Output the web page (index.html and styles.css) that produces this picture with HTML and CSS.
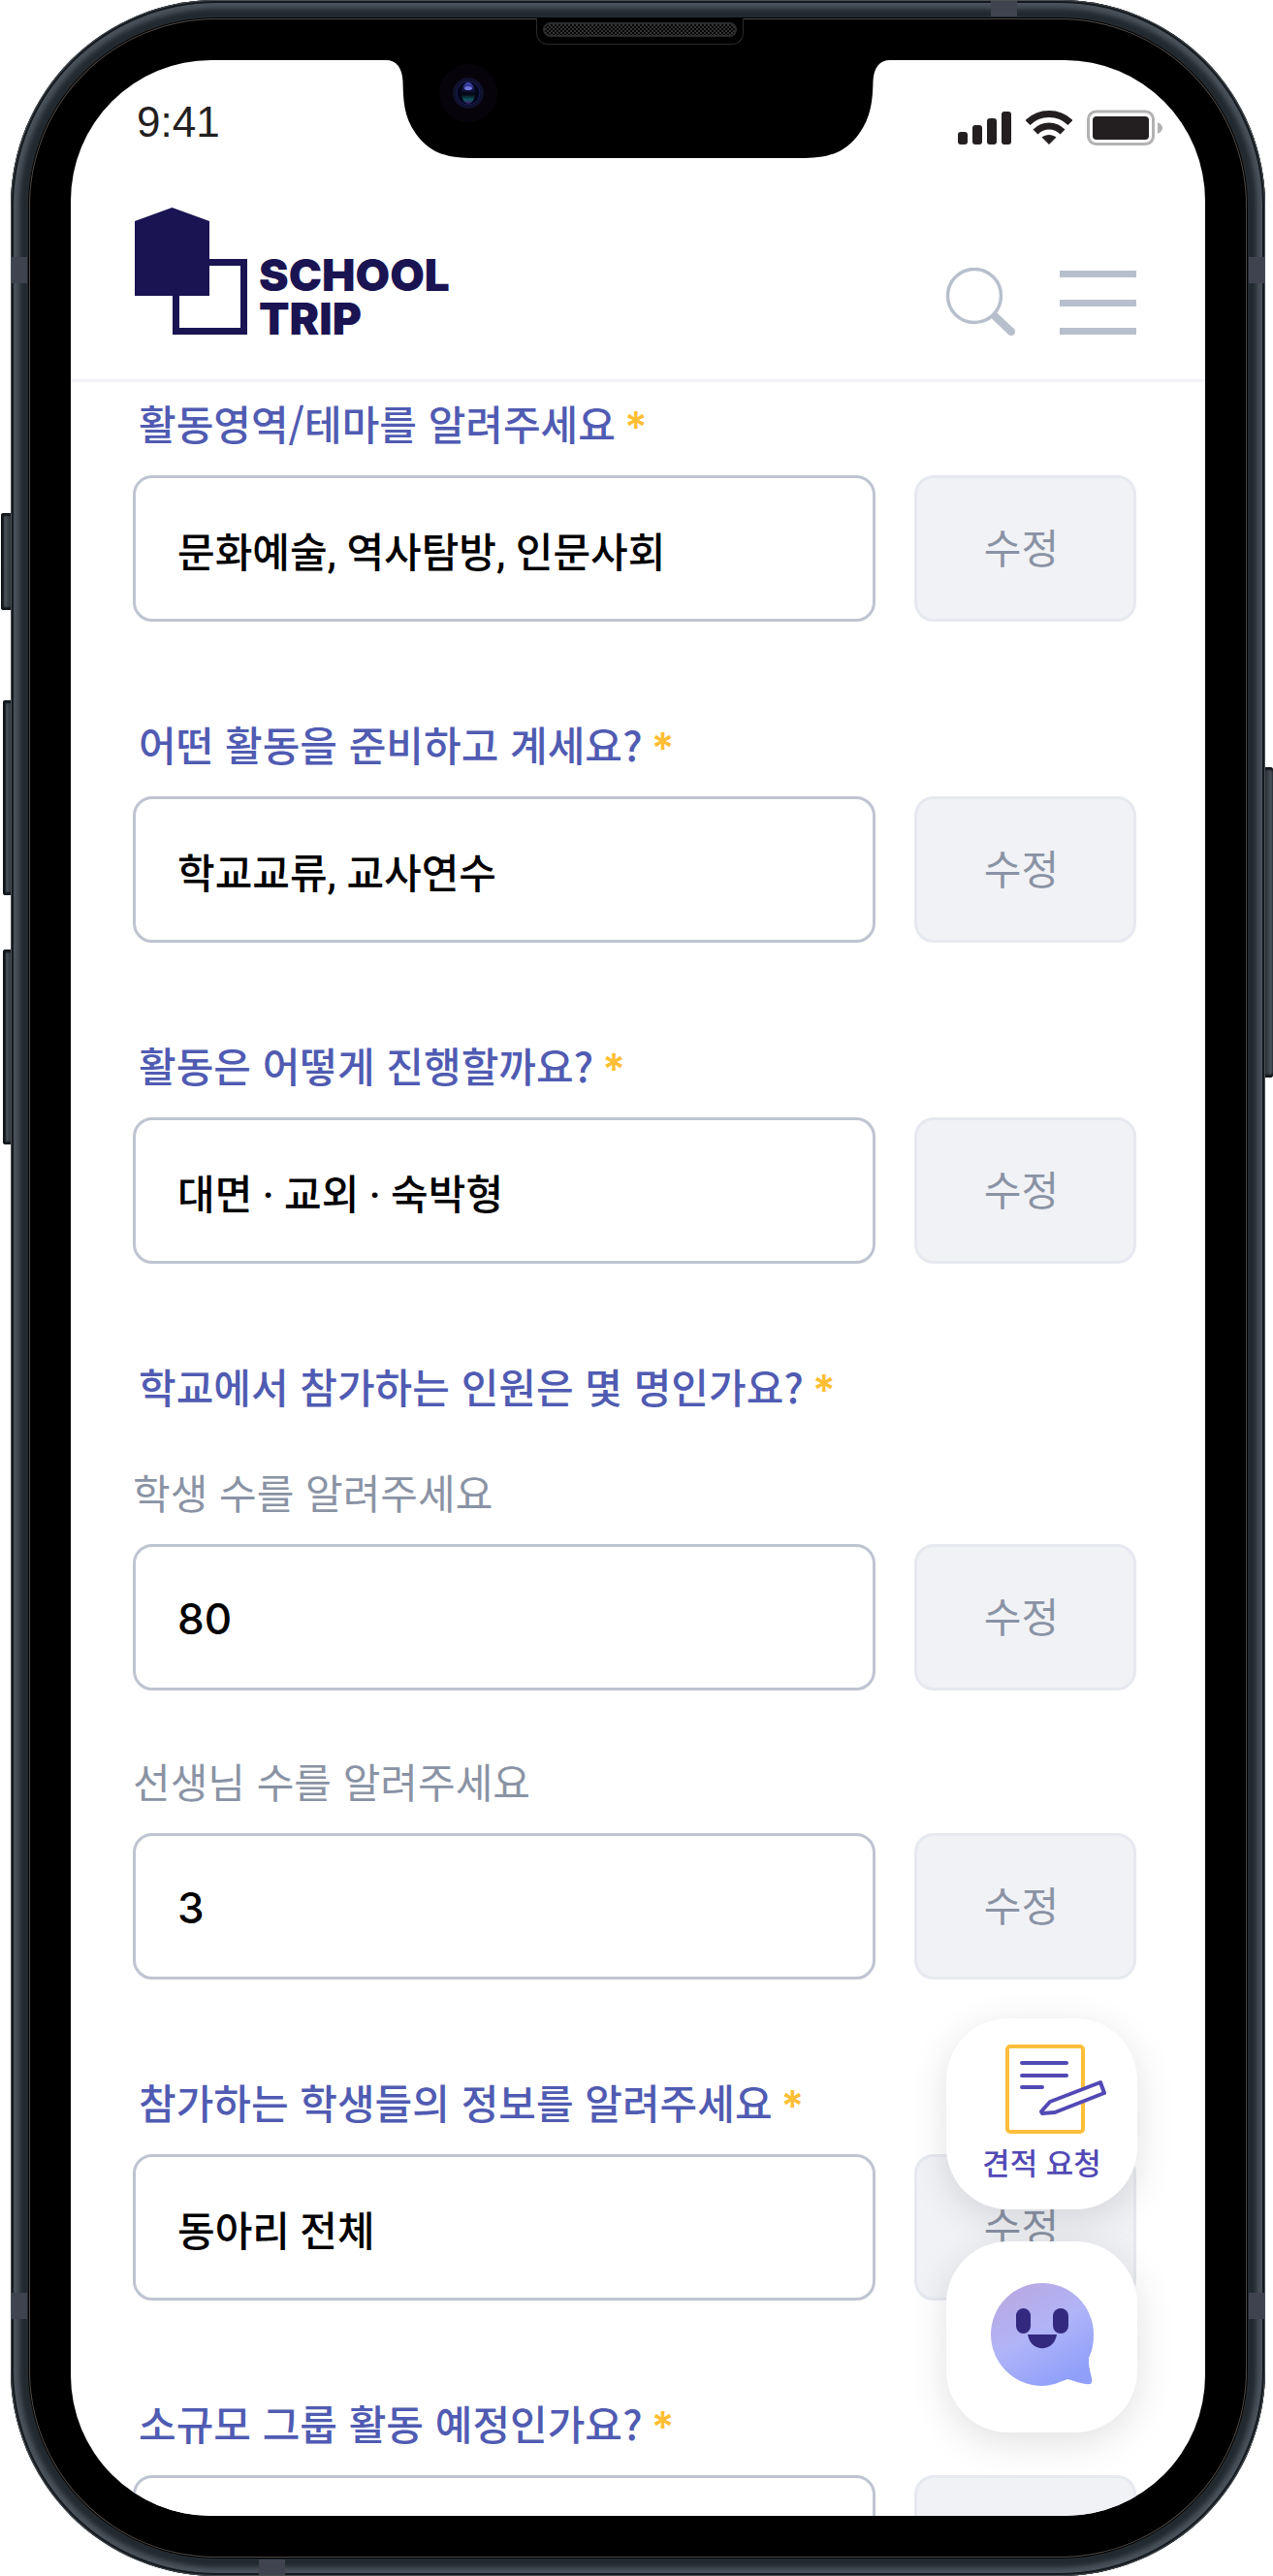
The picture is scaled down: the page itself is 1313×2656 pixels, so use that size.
FILE: index.html
```html
<!DOCTYPE html>
<html lang="ko">
<head>
<meta charset="utf-8">
<meta name="viewport" content="width=device-width, initial-scale=1">
<title>School Trip</title>
<link rel="stylesheet" href="styles.css">
</head>
<body>
<div class="device">
  <span class="key key-mute"></span>
  <span class="key key-up"></span>
  <span class="key key-down"></span>
  <span class="key key-power"></span>
  <div class="frame">
    <span class="band band-left band-upper"></span>
    <span class="band band-right band-upper"></span>
    <span class="band band-left band-lower"></span>
    <span class="band band-right band-lower"></span>
    <span class="band band-top"></span>
    <span class="band band-bottom"></span>
    <div class="bezel">
      <span class="speaker"></span>
      <div class="screen">
        <svg class="notch" width="520" height="102" viewBox="0 0 520 102" aria-hidden="true">
          <defs>
            <linearGradient id="lens" x1="0" y1="0" x2="0" y2="1">
              <stop offset="0" stop-color="#4b52c8"/><stop offset=".3" stop-color="#15194a"/>
              <stop offset=".55" stop-color="#05060f"/><stop offset=".8" stop-color="#0f5560"/><stop offset="1" stop-color="#4b1c66"/>
            </linearGradient>
          </defs>
          <path d="M0 0C11 0 17 8 17.500 22C18 40 18 58 31 76C46 97 65 101 92 101H427C454 101 473 97 488 76C501 58 502 40 502.500 22C503 8 509 0 520 0Z"/>
          <circle cx="85" cy="34" r="30" fill="#06030a"/>
          <circle cx="85" cy="34" r="16" fill="#10112c"/>
          <circle cx="85" cy="34" r="12" fill="#04061a" stroke="#181e58"/>
          <ellipse cx="85" cy="34" rx="7" ry="11" fill="url(#lens)"/>
          <ellipse cx="85" cy="29" rx="4" ry="2" fill="#6f76dc"/>
        </svg>

        <div class="status">
          <span class="time">9:41</span>
          <div class="status-icons">
            <svg width="55" height="37" viewBox="0 0 55 37" fill="#231f20" aria-hidden="true">
              <rect x="0" y="23" width="10" height="13" rx="3"/><rect x="15" y="16" width="10" height="20" rx="3"/><rect x="30" y="9" width="10" height="27" rx="3"/><rect x="45" y="2" width="10" height="34" rx="3"/>
            </svg>
            <svg width="48" height="37" viewBox="0 0 48 37" fill="none" stroke="#231f20" stroke-width="7" aria-hidden="true">
              <path d="M2 13.500C14 1.500 34 1.500 46 13.500"/><path d="M10 23C18 15 30 15 38 23"/>
              <path d="M24 36L16.500 28.500C21 25 27 25 31.500 28.500Z" fill="#231f20" stroke="none"/>
            </svg>
            <svg width="78" height="37" viewBox="0 0 78 37" aria-hidden="true">
              <rect x="1.500" y="2" width="67" height="33.500" rx="8" fill="none" stroke="#b3b2b3" stroke-width="3"/>
              <rect x="6" y="7" width="58" height="24" rx="4" fill="#231f20"/>
              <path d="M73 13C77 15 78 17 78 19C78 21 77 23 73 25Z" fill="#b3b2b3"/>
            </svg>
          </div>
        </div>

        <header class="header">
          <a class="logo" href="#">
            <svg width="116" height="132" viewBox="0 0 116 132" fill="#1a1452" aria-hidden="true">
              <path d="M0 14L38.500 0L77 14V91H0Z"/>
              <path d="M77 53H116V131H39V91H46V124H109V60H77Z"/>
            </svg>
            <span class="logo-text">SCHOOL<br>TRIP</span>
          </a>
          <div class="tools">
            <button class="tool" type="button" aria-label="검색">
              <svg width="73" height="70" viewBox="0 0 73 70" fill="none" stroke="#b8bfcc" aria-hidden="true">
                <circle cx="30" cy="29" r="27.500" stroke-width="3.500"/>
                <path d="M49 48L68 66" stroke-width="8"/><circle cx="68" cy="66" r="4" fill="#b8bfcc" stroke="none"/>
              </svg>
            </button>
            <button class="tool" type="button" aria-label="메뉴">
              <svg width="79" height="67" viewBox="0 0 79 67" fill="#b8bfcc" aria-hidden="true">
                <path d="M0 0H79V7H0ZM0 30H79V37H0ZM0 59H79V66H0Z"/>
              </svg>
            </button>
          </div>
        </header>

        <form class="form">
          <section class="field">
            <label class="label" for="theme">활동영역/테마를 알려주세요<b class="star">*</b></label>
            <div class="row"><input class="input" id="theme" type="text" value="문화예술, 역사탐방, 인문사회"><button class="edit" type="button">수정</button></div>
          </section>
          <section class="field">
            <label class="label" for="activity">어떤 활동을 준비하고 계세요?<b class="star">*</b></label>
            <div class="row"><input class="input" id="activity" type="text" value="학교교류, 교사연수"><button class="edit" type="button">수정</button></div>
          </section>
          <section class="field">
            <label class="label" for="method">활동은 어떻게 진행할까요?<b class="star">*</b></label>
            <div class="row"><input class="input" id="method" type="text" value="대면 · 교외 · 숙박형"><button class="edit" type="button">수정</button></div>
          </section>
          <section class="field">
            <h2 class="label">학교에서 참가하는 인원은 몇 명인가요?<b class="star">*</b></h2>
            <div class="counts">
              <div class="count">
                <label class="sublabel" for="students">학생 수를 알려주세요</label>
                <div class="row"><input class="input number" id="students" type="text" inputmode="numeric" value="80"><button class="edit" type="button">수정</button></div>
              </div>
              <div class="count">
                <label class="sublabel" for="teachers">선생님 수를 알려주세요</label>
                <div class="row"><input class="input number" id="teachers" type="text" inputmode="numeric" value="3"><button class="edit" type="button">수정</button></div>
              </div>
            </div>
          </section>
          <section class="field">
            <label class="label" for="info">참가하는 학생들의 정보를 알려주세요<b class="star">*</b></label>
            <div class="row"><input class="input" id="info" type="text" value="동아리 전체"><button class="edit" type="button">수정</button></div>
          </section>
          <section class="field">
            <label class="label" for="group">소규모 그룹 활동 예정인가요?<b class="star">*</b></label>
            <div class="row"><input class="input" id="group" type="text"><button class="edit" type="button" aria-label="수정"></button></div>
          </section>
        </form>

        <div class="floating">
          <button class="fab" type="button">
            <svg class="quote-icon" width="104" height="94" viewBox="0 0 104 94" fill="none" stroke="#5249b5" stroke-width="4" stroke-linecap="round" stroke-linejoin="round" aria-hidden="true">
              <rect x="2" y="3" width="78" height="88" rx="3" stroke="#ffbe3b"/>
              <path d="M17 20H63M17 33H63M17 45H38"/>
              <path d="M37 70L46 60L98 40L102 51L51 71L38 72Z" fill="#fff"/>
            </svg>
            <span class="fab-text">견적 요청</span>
          </button>
          <button class="fab" type="button" aria-label="챗봇">
            <svg class="bubble-icon" width="108" height="108" viewBox="0 0 108 108" aria-hidden="true">
              <defs>
                <linearGradient id="bubble" x1=".1" y1=".1" x2=".6" y2="1">
                  <stop offset="0" stop-color="#b9a9e2"/><stop offset=".5" stop-color="#b0b4f8"/><stop offset="1" stop-color="#90a0fa"/>
                </linearGradient>
              </defs>
              <path d="M54 1A53 53 0 1 0 54 107C64 107 72 103 80 100C88 102 96 106 104 105C108 101 101 92 102 78C106 70 107 62 107 54A53 53 0 0 0 54 1Z" fill="url(#bubble)"/>
              <g fill="#332a80">
                <rect x="27" y="27" width="15" height="26" rx="7.500"/><rect x="65" y="27" width="16" height="26" rx="8"/>
                <path d="M39 54H69C66 73 42 73 39 54Z"/>
              </g>
            </svg>
          </button>
        </div>
      </div>
    </div>
  </div>
</div>
</body>
</html>
```
FILE: styles.css
```css
* { box-sizing: border-box; }

body {
  margin: 0;
  background: #fff;
  font-family: "Noto Sans CJK KR", "Noto Sans", sans-serif;
}

button { padding: 0; border: 0; background: none; font: inherit; }

/* Phone body */
.device {
  position: relative;
  display: grid;
  aspect-ratio: 1313 / 2656;
  padding: 0 8px 0 11px;
}

.frame {
  position: relative;
  display: grid;
  min-height: 0;
  padding: 18px;
  border-radius: 212px;
  background: #222a30;
  box-shadow:
    inset 0 0 0 1px #4b5054,
    inset 0 0 0 3px #141a1f,
    inset 0 0 5px 9px #4a525b;
}

.bezel {
  position: relative;
  display: grid;
  min-height: 0;
  padding: 44px;
  border-radius: 194px;
  background: #000;
  box-shadow: inset 0 0 0 1px #000, inset 0 0 0 2px #504b48;
}

.key {
  position: absolute;
  border-radius: 3px;
  background: linear-gradient(90deg, #12181c 0 2px, #4a525a 4px, #20272c);
  box-shadow: inset 0 3px 2px #12181c, inset 0 -3px 2px #12181c;
}
.key-mute { left: 1px; top: 529px; width: 12px; height: 100px; }
.key-up { left: 3px; top: 722px; width: 10px; height: 201px; }
.key-down { left: 3px; top: 979px; width: 10px; height: 201px; }
.key-power { right: 0; top: 791px; width: 10px; height: 320px; background: linear-gradient(270deg, #4a525a 0 2px, #20272c); }

.band { position: absolute; background: #3e434f; }
.band-left { left: 1px; width: 16px; height: 27px; }
.band-right { right: 1px; width: 16px; height: 27px; }
.band-upper { top: 265px; }
.band-lower { bottom: 265px; }
.band-top { top: 1px; right: 256px; width: 27px; height: 16px; }
.band-bottom { bottom: 1px; left: 256px; width: 27px; height: 16px; }

.speaker {
  position: absolute;
  top: 1px;
  left: calc(50% + 2px);
  width: 214px;
  height: 27px;
  border: 1px solid #2b2a2a;
  border-top: 0;
  border-radius: 0 0 12px 12px;
  background: #000;
  transform: translateX(-50%);
}
.speaker::before {
  content: "";
  position: absolute;
  inset: 4px 6px 7px;
  border: 2px solid #2c2c2c;
  border-radius: 8px;
  background: repeating-conic-gradient(#050505 0 25%, #333 0 50%) 0 0 / 4px 4px;
}

.screen {
  position: relative;
  min-height: 0;
  overflow: hidden;
  border-radius: 145px;
  background: #fff;
}

.notch {
  position: absolute;
  top: 0;
  left: 50%;
  transform: translateX(-50%);
}

/* Status bar */
.status {
  display: flex;
  justify-content: space-between;
  align-items: flex-end;
  padding: 40px 44px 0 68px;
}
.time {
  color: #231f20;
  font: 44px/48px "Liberation Sans", Arial, sans-serif;
}
.status-icons { display: flex; gap: 15px; }
.status-icons svg, .tool svg, .logo svg, .fab svg { display: block; }

/* Header */
.header {
  display: flex;
  justify-content: space-between;
  align-items: flex-end;
  padding: 64px 71px 40px 66px;
  border-bottom: 3px solid #f1f3f8;
}
.logo {
  display: flex;
  align-items: flex-end;
  gap: 12px;
  color: #1a1452;
  text-decoration: none;
}
.logo svg { margin-bottom: 5px; }
.logo-text { font: 900 46px/45px Inter, sans-serif; }
.tools { display: flex; align-items: flex-end; gap: 45px; padding-bottom: 5px; }

/* Form */
.form {
  display: flex;
  flex-direction: column;
  gap: 96px;
  padding: 12px 71px 0 64px;
}
.label, .sublabel {
  display: block;
  margin: 0 0 24px;
  font-size: 42px;
  line-height: 60px;
  white-space: nowrap;
}
.label { display: flex; gap: 9px; padding-left: 6px; color: #505bb2; font-weight: 500; }
.sublabel { color: #8a93a4; }
.star { height: 60px; padding-top: 4px; color: #ffbe33; font: 600 44px/60px Inter, sans-serif; }
h2.label { margin-bottom: 49px; }
.counts { display: flex; flex-direction: column; gap: 63px; }

.row { display: flex; gap: 40px; }
.input {
  flex: 1;
  min-width: 0;
  height: 151px;
  padding: 2px 43px 0;
  border: 3px solid #bfc4d1;
  border-radius: 20px;
  background: #fff;
  color: #000;
  font: 500 42px/60px Roboto, "Noto Sans CJK KR", sans-serif;
}
.number { font-family: Inter, sans-serif; font-size: 44px; }
.edit {
  flex: none;
  width: 229px;
  height: 151px;
  padding: 0 8px 6px 0;
  border: 3px solid #e6e9ef;
  border-radius: 20px;
  background: #f1f2f6;
  color: #8a93a4;
  font-size: 42px;
  line-height: 60px;
}

/* Floating actions */
.floating {
  position: absolute;
  right: 70px;
  bottom: 86px;
  display: flex;
  flex-direction: column;
  gap: 33px;
}
.fab {
  display: flex;
  flex-direction: column;
  align-items: center;
  justify-content: center;
  width: 197px;
  height: 197px;
  border-radius: 64px;
  background: #fff;
  box-shadow: 0 10px 40px rgba(0, 0, 0, .12);
}
.quote-icon { margin: 0 0 4px 28px; }
.bubble-icon { margin-bottom: 6px; }
.fab-text { color: #5249b5; font-size: 31px; font-weight: 500; line-height: 48px; }
```
